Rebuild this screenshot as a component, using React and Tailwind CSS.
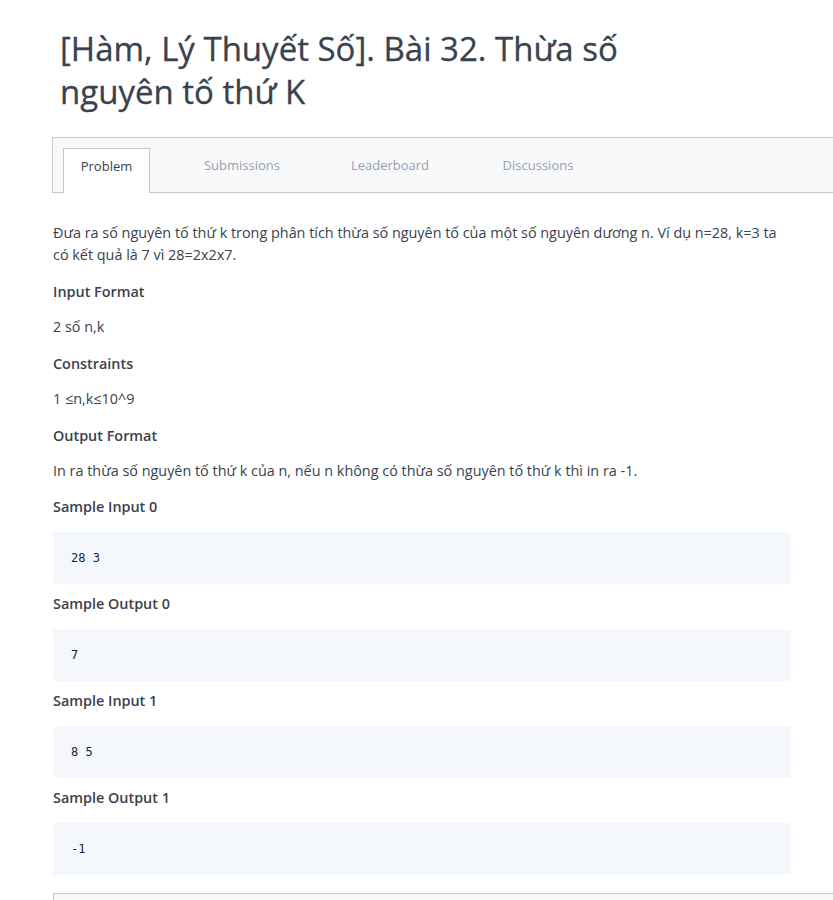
const samples = [
  { label: "Sample Input 0", value: "28 3" },
  { label: "Sample Output 0", value: "7" },
  { label: "Sample Input 1", value: "8 5" },
  { label: "Sample Output 1", value: "-1" },
];

const tabs = ["Problem", "Submissions", "Leaderboard", "Discussions"];

const App = () => {
  return (
    <div className="min-h-[900px] bg-white text-[#39424e] font-['Open_Sans',sans-serif] overflow-hidden">
      <h1 className="pl-[60px] pt-[27px] w-[690px] text-[33px] leading-[43px] text-[#39424e] [-webkit-text-stroke:0.3px_#39424e]">
        [Hàm, Lý Thuyết Số]. Bài 32. Thừa số nguyên tố thứ K
      </h1>

      <div className="ml-[52px] mt-[24px] h-[56px] border border-r-0 border-[#c2c7d0] bg-[#f8f9fb] flex items-end pl-[10px]">
        {tabs.map((tab, i) => (
          <div
            key={tab}
            className={
              i === 0
                ? "h-[45px] w-[87px] mr-[18px] -mb-px pt-[8px] bg-white border border-b-0 border-[#c2c7d0] text-center leading-[18px] text-[13px] text-[#39424e]"
                : "h-[45px] w-[148px] pt-[9px] text-center leading-[18px] text-[13px] text-[#979faf]"
            }
          >
            {tab}
          </div>
        ))}
      </div>

      <div className="ml-[53px] w-[738px] pt-[29px] text-[14.4px]">
        <p className="leading-[22px]">
          Đưa ra số nguyên tố thứ k trong phân tích thừa số nguyên tố của một số nguyên dương n. Ví dụ n=28, k=3 ta có kết quả là 7 vì 28=2x2x7.
        </p>

        <h3 className="mt-[15px] font-semibold leading-[22px]">Input Format</h3>
        <p className="mt-[13px] leading-[22px]">2 số n,k</p>

        <h3 className="mt-[15px] font-semibold leading-[22px]">Constraints</h3>
        <p className="mt-[13px] leading-[22px]">1 ≤n,k≤10^9</p>

        <h3 className="mt-[15px] font-semibold leading-[22px]">Output Format</h3>
        <p className="mt-[13px] leading-[22px]">
          In ra thừa số nguyên tố thứ k của n, nếu n không có thừa số nguyên tố thứ k thì in ra -1.
        </p>

        {samples.map((s, i) => (
          <div key={s.label}>
            <h3 className={(i === 0 ? "mt-[14px]" : "mt-[9px]") + " font-semibold leading-[22px]"}>{s.label}</h3>
            <pre className="mt-[14px] h-[52px] rounded-[3px] bg-[#f4f8fd] px-[18px] flex items-center text-[12px] text-[#1b2330] font-['DejaVu_Sans_Mono',monospace]">
              {s.value}
            </pre>
          </div>
        ))}
      </div>

      <div className="ml-[53px] mt-[18px] h-[20px] border border-r-0 border-b-0 border-[#c2c7d0] bg-[#f8f9fb]" />
    </div>
  );
};

export default App;
